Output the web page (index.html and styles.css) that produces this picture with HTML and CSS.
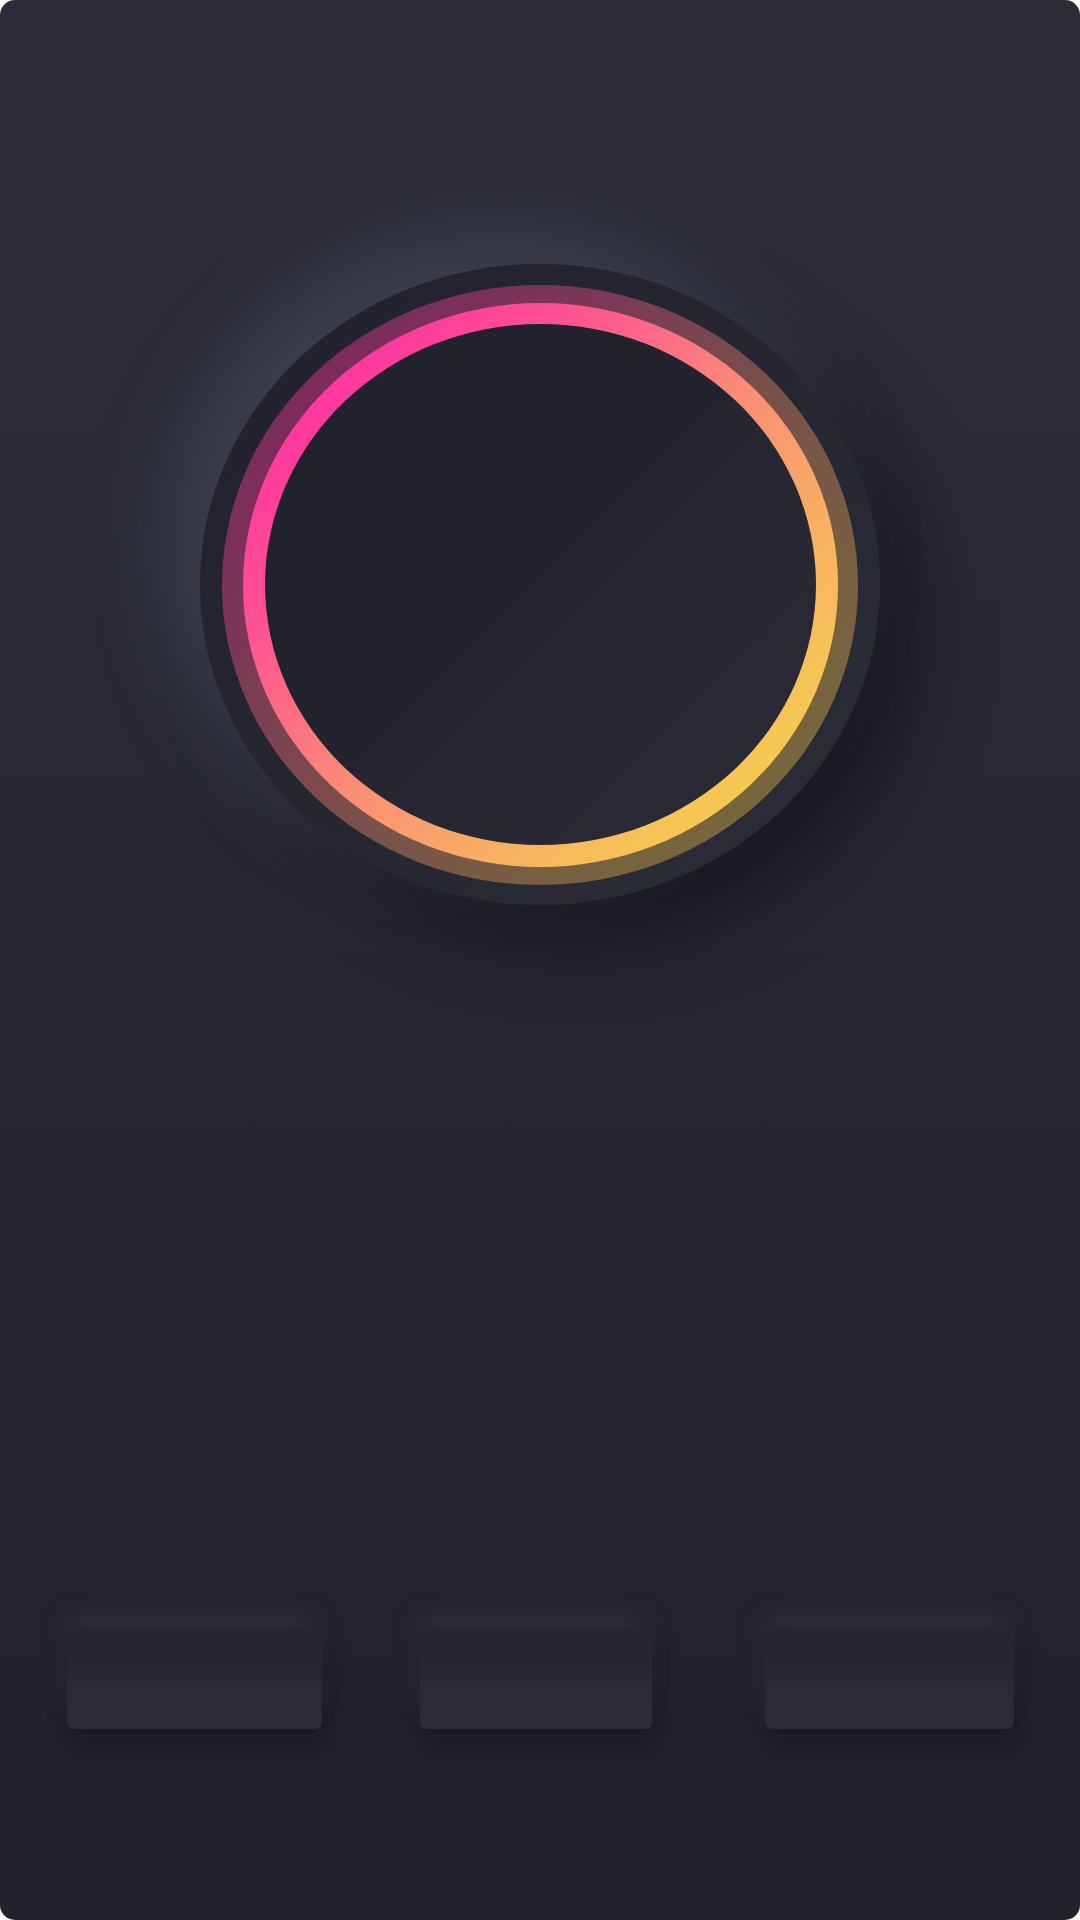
FILE: index.html
```html
<!DOCTYPE html>
<html lang="en">
<head>
<meta charset="utf-8">
<title>Dial</title>
<link rel="stylesheet" href="styles.css">
</head>
<body>
<main class="screen">
  <section class="dial-area">
    <div class="dial">
      <div class="ring-halo">
        <div class="ring">
          <div class="core"></div>
        </div>
      </div>
    </div>
  </section>
  <nav class="controls">
    <button class="key key-a" type="button"></button>
    <button class="key key-b" type="button"></button>
    <button class="key key-c" type="button"></button>
  </nav>
</main>
</body>
</html>
```
FILE: styles.css
```css
html, body {
  margin: 0;
  padding: 0;
  background: #ffffff;
}
body {
  width: 1080px;
  height: 1920px;
  font-family: "Liberation Sans", Arial, sans-serif;
  overflow: hidden;
}
.screen {
  width: 1080px;
  height: 1920px;
  border-radius: 15px;
  overflow: hidden;
  background: linear-gradient(180deg, #2c2d39 0%, #272834 45%, #22222e 100%);
  display: flex;
  flex-direction: column;
  box-sizing: border-box;
  padding-top: 264px;
  padding-bottom: 191px;
}
.dial-area {
  display: flex;
  justify-content: center;
}
.dial {
  width: 680px;
  height: 641px;
  border-radius: 50%;
  background: linear-gradient(135deg, #21222d 0%, #252631 50%, #2b2d38 100%);
  box-shadow:
    -36px -34px 72px rgba(92, 94, 112, 0.40),
    38px 36px 72px rgba(10, 10, 18, 0.52);
  display: flex;
  align-items: center;
  justify-content: center;
}
.ring-halo {
  width: 636px;
  height: 600px;
  border-radius: 50%;
  background:
    linear-gradient(rgba(35, 36, 47, 0.6), rgba(35, 36, 47, 0.6)),
    linear-gradient(135deg, #ff1aae 0%, #ff5590 30%, #fb8a76 50%, #f8b262 70%, #f4e040 100%);
  display: flex;
  align-items: center;
  justify-content: center;
}
.ring {
  width: 595px;
  height: 564px;
  border-radius: 50%;
  background: linear-gradient(135deg, #ff1aae 0%, #ff5590 30%, #fb8a76 50%, #f8b262 70%, #f4e040 100%);
  display: flex;
  align-items: center;
  justify-content: center;
}
.core {
  width: 551px;
  height: 521px;
  border-radius: 50%;
  background: linear-gradient(135deg, #20212c 0%, #22232e 49%, #252631 51%, #2a2b37 100%);
}
.controls {
  margin-top: auto;
  display: flex;
  padding-left: 67px;
  height: 99px;
}
.key {
  height: 99px;
  border: 0;
  padding: 0;
  border-radius: 7px;
  background: linear-gradient(180deg, #242531 0%, #262733 42%, #2a2b37 58%, #2b2c38 100%);
  box-shadow:
    -4px -18px 22px rgba(70, 72, 88, 0.22),
    4px 16px 22px rgba(10, 10, 18, 0.35);
}
.key-a { width: 255px; }
.key-b { width: 232px; margin-left: 98px; }
.key-c { width: 249px; margin-left: 113px; }
```
